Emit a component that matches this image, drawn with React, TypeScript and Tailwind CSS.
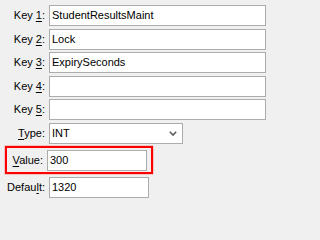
import type { ReactNode } from "react";

const font = { fontFamily: '"Liberation Sans", Arial, sans-serif' };

function Hotkey({ before, k, after }: { before: string; k: string; after: string }) {
  return (
    <>
      {before}
      <span className="underline underline-offset-[2px] decoration-[1px]">{k}</span>
      {after}
    </>
  );
}

function Label({ children, width }: { children: ReactNode; width: string }) {
  return <label className={`${width} shrink-0 text-right text-black`}>{children}</label>;
}

function TextBox({ value, width }: { value: string; width: string }) {
  return (
    <div
      className={`${width} flex h-[21px] items-center border border-[#acacac] bg-white pl-[2px] text-black`}
    >
      {value}
    </div>
  );
}

function Row({ label, value, width = "w-[217px]" }: { label: ReactNode; value: string; width?: string }) {
  return (
    <div className="flex items-center gap-[4px]">
      <Label width="w-[45px]">{label}</Label>
      <TextBox value={value} width={width} />
    </div>
  );
}

export default function App() {
  const keys = ["StudentResultsMaint", "Lock", "ExpirySeconds", "", ""];

  return (
    <div className="min-h-screen w-full bg-[#f0f0f0]">
      <div
        className="flex h-[202px] w-[271px] flex-col gap-[2.5px] bg-[#f0f0f0] pt-[5px] text-[11px] leading-none"
        style={font}
      >
        {keys.map((v, i) => (
          <Row key={i} label={<Hotkey before="Key " k={String(i + 1)} after=":" />} value={v} />
        ))}

        <div className="flex items-center gap-[4px]">
          <Label width="w-[45px]">
            <Hotkey before="" k="T" after="ype:" />
          </Label>
          <div className="flex h-[21px] w-[134px] items-center justify-between border border-[#acacac] bg-white pl-[2px] pr-[5px] text-black">
            <span>INT</span>
            <svg width="8" height="5" viewBox="0 0 8 5" fill="none">
              <polyline points="0.8,0.8 4,4 7.2,0.8" stroke="#5a5a5a" strokeWidth="1.6" />
            </svg>
          </div>
        </div>

        <div className="ml-[5px] flex w-[148px] items-start gap-[4px] border-2 border-[#ff0000] pb-[1px] pr-[2px] pt-[2px] shadow-[0_0_0_0.5px_rgba(255,0,0,0.35)]">
          <div className="flex h-[21px] items-center">
            <Label width="w-[36px]">
              <Hotkey before="" k="V" after="alue:" />
            </Label>
          </div>
          <TextBox value="300" width="w-[100px]" />
        </div>

        <Row label={<Hotkey before="Defau" k="l" after="t:" />} value="1320" width="w-[100px]" />
      </div>
    </div>
  );
}
